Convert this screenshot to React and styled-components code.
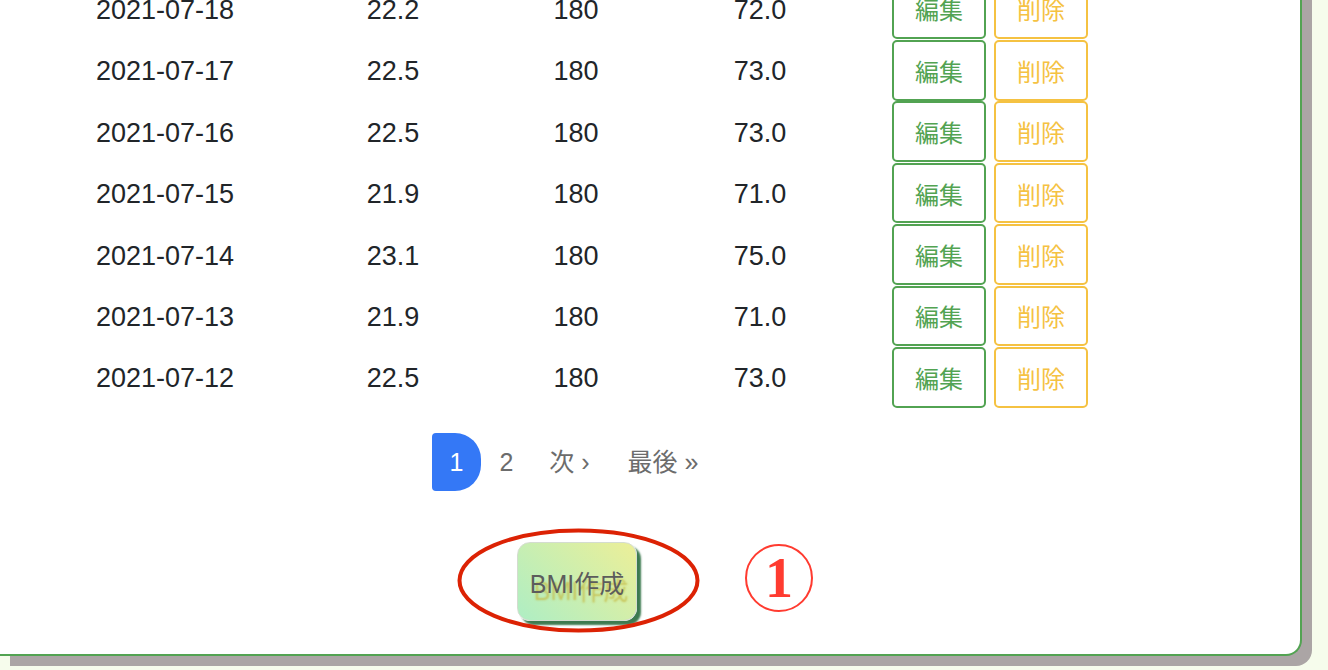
import React from 'react';
import styled, { createGlobalStyle } from 'styled-components';

const GlobalStyle = createGlobalStyle`
  html, body {
    margin: 0;
    padding: 0;
    background: #f6fcec;
  }
  body {
    font-family: "Liberation Sans", "Noto Sans CJK JP", sans-serif;
    color: #212529;
  }
`;

const records = [
  { date: '2021-07-18', bmi: '22.2', height: 180, weight: '72.0' },
  { date: '2021-07-17', bmi: '22.5', height: 180, weight: '73.0' },
  { date: '2021-07-16', bmi: '22.5', height: 180, weight: '73.0' },
  { date: '2021-07-15', bmi: '21.9', height: 180, weight: '71.0' },
  { date: '2021-07-14', bmi: '23.1', height: 180, weight: '75.0' },
  { date: '2021-07-13', bmi: '21.9', height: 180, weight: '71.0' },
  { date: '2021-07-12', bmi: '22.5', height: 180, weight: '73.0' },
];

const App = () => {
  return (
    <>
      <GlobalStyle />
      <Page>
        <Card>
          <Content>
            <Table>
              {records.map((r) => (
                <Row key={r.date}>
                  <Cell>{r.date}</Cell>
                  <Cell>{r.bmi}</Cell>
                  <Cell>{r.height}</Cell>
                  <Cell>{r.weight}</Cell>
                  <Actions>
                    <ActionButton $tone="edit">編集</ActionButton>
                    <ActionButton $tone="delete">削除</ActionButton>
                  </Actions>
                </Row>
              ))}
            </Table>

            <Pagination>
              <PageItem $active>1</PageItem>
              <PageItem>2</PageItem>
              <PageItem>次 ›</PageItem>
              <PageItem $wide>最後 »</PageItem>
            </Pagination>

            <CreateArea>
              <CreateButton>BMI作成</CreateButton>
              <Ellipse viewBox="0 0 243 105">
                <ellipse cx="121.5" cy="52.5" rx="119" ry="50" fill="none" stroke="#dc2204" strokeWidth="4" />
              </Ellipse>
              <StepMark>1</StepMark>
            </CreateArea>
          </Content>
        </Card>
      </Page>
    </>
  );
};

const Page = styled.div`
  height: 100vh;
  box-sizing: border-box;
  overflow: hidden;
  display: flex;
  flex-direction: column;
  justify-content: flex-end;
  padding-bottom: 14px;
`;

const Card = styled.div`
  width: 1302px;
  box-sizing: border-box;
  background: #ffffff;
  border-right: 2px solid #52a352;
  border-bottom: 2px solid #52a352;
  border-bottom-right-radius: 16px;
  box-shadow: 10px 10px 0 #aba5a5;
  padding-bottom: 33px;
`;

const Content = styled.div`
  width: 1154px;
  display: flex;
  flex-direction: column;
  align-items: center;
`;

const Table = styled.div`
  width: 100%;
  display: flex;
  flex-direction: column;
`;

const Row = styled.div`
  display: grid;
  grid-template-columns: 330px 126px 240px 128px 1fr;
  align-items: center;
  height: 61.4px;
  font-size: 27px;
`;

const Cell = styled.div`
  text-align: center;
  padding-top: 3px;
`;

const Actions = styled.div`
  display: flex;
  gap: 8px;
  margin-left: 68px;
`;

const ActionButton = styled.button`
  width: 94px;
  height: 60.5px;
  box-sizing: border-box;
  background: #ffffff;
  border: 2px solid ${(p) => (p.$tone === 'edit' ? '#52a352' : '#f5c242')};
  color: ${(p) => (p.$tone === 'edit' ? '#52a352' : '#f5c242')};
  border-radius: 5px;
  font-family: "Noto Sans CJK JP", sans-serif;
  font-size: 24px;
  padding: 0;
`;

const Pagination = styled.nav`
  display: flex;
  margin-top: 25px;
  margin-left: -4px;
`;

const PageItem = styled.span`
  height: 58px;
  line-height: 58px;
  padding: 0 ${(p) => (p.$wide ? '20px' : '18px')};
  font-size: 25px;
  color: ${(p) => (p.$active ? '#ffffff' : '#6c6c6c')};
  background: ${(p) => (p.$active ? '#3478f6' : 'transparent')};
  border-radius: ${(p) => (p.$active ? '4px 26px 26px 4px' : '0')};
  font-family: "Liberation Sans", "Noto Sans CJK JP", sans-serif;
`;

const CreateArea = styled.div`
  position: relative;
  margin-top: 51px;
`;

const CreateButton = styled.button`
  width: 120px;
  height: 79px;
  box-sizing: border-box;
  border: 1px solid #d4dcd0;
  border-radius: 13px;
  background: linear-gradient(45deg, #aeeec4 0%, #ecef98 100%);
  box-shadow: 4px 4px 2px #3d7a50;
  color: #5c5c5c;
  font-family: "Liberation Sans", "Noto Sans CJK JP", sans-serif;
  font-size: 25px;
  text-shadow: 4px 7px 2px rgba(196, 186, 70, 0.8);
  padding: 0;
`;

const Ellipse = styled.svg`
  position: absolute;
  left: -60px;
  top: -14px;
  width: 243px;
  height: 105px;
  pointer-events: none;
`;

const StepMark = styled.span`
  position: absolute;
  left: 228px;
  top: 2px;
  width: 64px;
  height: 64px;
  border: 2px solid #ff3b30;
  border-radius: 50%;
  display: flex;
  align-items: center;
  justify-content: center;
  color: #ff3b30;
  font-family: "Liberation Serif", serif;
  font-weight: bold;
  font-size: 56px;
  line-height: 1;
`;

export default App;
